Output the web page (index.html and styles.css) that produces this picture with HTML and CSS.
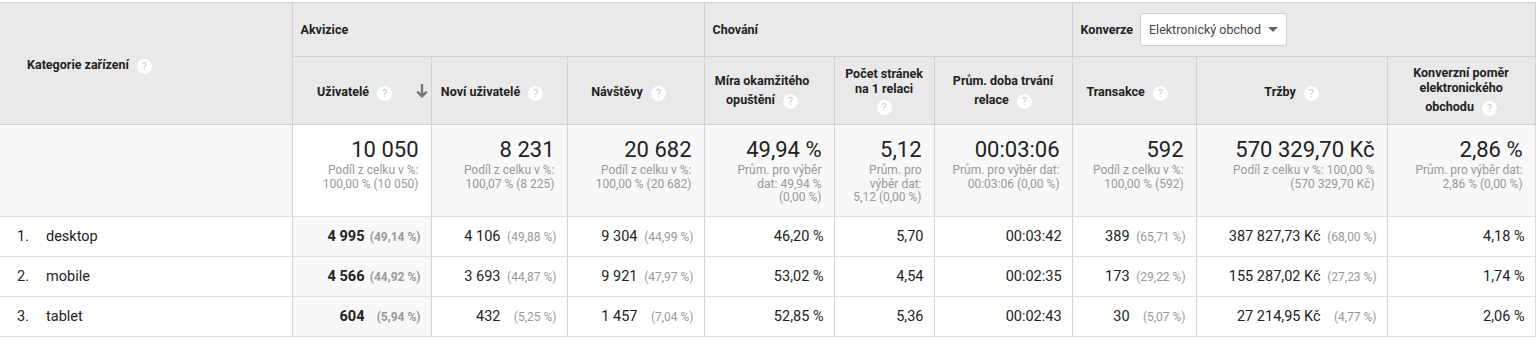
FILE: index.html
```html
<!DOCTYPE html>
<html lang="cs">
<head>
<meta charset="utf-8">
<title>Kategorie zařízení</title>
<link rel="stylesheet" href="styles.css">
</head>
<body>
<table class="report">
  <colgroup>
    <col class="c-dim"><col class="c-users"><col class="c-new"><col class="c-visits"><col class="c-bounce">
    <col class="c-pages"><col class="c-dur"><col class="c-tx"><col class="c-rev"><col class="c-conv">
  </colgroup>
  <thead>
    <tr class="groups">
      <th class="dim-head" rowspan="2">Kategorie zařízení<span class="help">?</span></th>
      <th class="group" colspan="3">Akvizice</th>
      <th class="group" colspan="3">Chování</th>
      <th class="group" colspan="3">
        <div class="conv-group">
          <span>Konverze</span>
          <span class="select">Elektronický obchod<span class="caret"></span></span>
        </div>
      </th>
    </tr>
    <tr class="metrics">
      <th class="metric shifted sorted">Uživatelé<span class="help">?</span>
        <svg class="sort" width="12" height="16" viewBox="0 0 12 16"><path d="M6 1v12.5M1.2 8.6 6 13.4 10.8 8.6" fill="none" stroke="#757575" stroke-width="2.4"/></svg>
      </th>
      <th class="metric shifted">Noví uživatelé<span class="help">?</span></th>
      <th class="metric shifted">Návštěvy<span class="help">?</span></th>
      <th class="metric shifted">Míra okamžitého<br>opuštění<span class="help">?</span></th>
      <th class="metric">Počet stránek<br>na 1 relaci<br><span class="help solo">?</span></th>
      <th class="metric">Prům. doba trvání<br>relace<span class="help">?</span></th>
      <th class="metric shifted">Transakce<span class="help">?</span></th>
      <th class="metric">Tržby<span class="help">?</span></th>
      <th class="metric last">Konverzní poměr<br>elektronického<br>obchodu<span class="help">?</span></th>
    </tr>
  </thead>
  <tbody>
    <tr class="totals">
      <td class="dim-cell"></td>
      <td class="tot sorted"><div class="big">10 050</div><div class="sub">Podíl z celku v %:<br>100,00 % (10 050)</div></td>
      <td class="tot"><div class="big">8 231</div><div class="sub">Podíl z celku v %:<br>100,07 % (8 225)</div></td>
      <td class="tot"><div class="big">20 682</div><div class="sub">Podíl z celku v %:<br>100,00 % (20 682)</div></td>
      <td class="tot"><div class="big">49,94 %</div><div class="sub">Prům. pro výběr<br>dat: 49,94 %<br>(0,00 %)</div></td>
      <td class="tot"><div class="big">5,12</div><div class="sub">Prům. pro<br>výběr dat:<br>5,12 (0,00 %)</div></td>
      <td class="tot"><div class="big">00:03:06</div><div class="sub">Prům. pro výběr dat:<br>00:03:06 (0,00 %)</div></td>
      <td class="tot"><div class="big">592</div><div class="sub">Podíl z celku v %:<br>100,00 % (592)</div></td>
      <td class="tot"><div class="big">570 329,70 Kč</div><div class="sub">Podíl z celku v %: 100,00 %<br>(570 329,70 Kč)</div></td>
      <td class="tot last"><div class="big">2,86 %</div><div class="sub">Prům. pro výběr dat:<br>2,86 % (0,00 %)</div></td>
    </tr>
    <tr class="row">
      <td class="dim-cell"><span class="idx">1.</span>desktop</td>
      <td class="num sorted"><b>4 995</b><span class="pct">(49,14 %)</span></td>
      <td class="num">4 106<span class="pct">(49,88 %)</span></td>
      <td class="num">9 304<span class="pct">(44,99 %)</span></td>
      <td class="num">46,20 %</td>
      <td class="num">5,70</td>
      <td class="num">00:03:42</td>
      <td class="num">389<span class="pct">(65,71 %)</span></td>
      <td class="num">387 827,73 Kč<span class="pct">(68,00 %)</span></td>
      <td class="num last">4,18 %</td>
    </tr>
    <tr class="row">
      <td class="dim-cell"><span class="idx">2.</span>mobile</td>
      <td class="num sorted"><b>4 566</b><span class="pct">(44,92 %)</span></td>
      <td class="num">3 693<span class="pct">(44,87 %)</span></td>
      <td class="num">9 921<span class="pct">(47,97 %)</span></td>
      <td class="num">53,02 %</td>
      <td class="num">4,54</td>
      <td class="num">00:02:35</td>
      <td class="num">173<span class="pct">(29,22 %)</span></td>
      <td class="num">155 287,02 Kč<span class="pct">(27,23 %)</span></td>
      <td class="num last">1,74 %</td>
    </tr>
    <tr class="row">
      <td class="dim-cell"><span class="idx">3.</span>tablet</td>
      <td class="num sorted"><b>604</b><span class="pct">(5,94 %)</span></td>
      <td class="num">432<span class="pct">(5,25 %)</span></td>
      <td class="num">1 457<span class="pct">(7,04 %)</span></td>
      <td class="num">52,85 %</td>
      <td class="num">5,36</td>
      <td class="num">00:02:43</td>
      <td class="num">30<span class="pct">(5,07 %)</span></td>
      <td class="num">27 214,95 Kč<span class="pct">(4,77 %)</span></td>
      <td class="num last">2,06 %</td>
    </tr>
  </tbody>
</table>
</body>
</html>
```

FILE: styles.css
```css
* { box-sizing: border-box; }

body {
  margin: 0;
  background: #fff;
  color: #222;
  font-family: Roboto, "Liberation Sans", Arial, sans-serif;
}

.report {
  border-collapse: collapse;
  table-layout: fixed;
  width: 1535px;
  margin-top: 2px;
}

.c-dim { width: 292px; }
.c-users { width: 139px; }
.c-new { width: 136px; }
.c-visits { width: 137px; }
.c-bounce { width: 130px; }
.c-pages { width: 100px; }
.c-dur { width: 138px; }
.c-tx { width: 124px; }
.c-rev { width: 191px; }
.c-conv { width: 148px; }

th {
  background: #e9e9e9;
  border-top: 1px solid #d2d2d2;
  border-left: 1px solid #d2d2d2;
  border-bottom: 1px solid #d2d2d2;
  font-size: 12.5px;
  font-weight: 700;
  color: #222;
  padding: 0;
}

th.dim-head {
  border-left: none;
  text-align: left;
  padding-left: 27px;
  vertical-align: middle;
}

tr.groups { height: 54px; }
tr.metrics { height: 68px; }

th.group {
  text-align: left;
  padding-left: 8px;
  vertical-align: middle;
}

th.group:last-child { border-right: 1px solid #d2d2d2; }

.conv-group {
  display: flex;
  align-items: center;
  gap: 7px;
}

.select {
  display: inline-flex;
  align-items: center;
  justify-content: space-between;
  width: 147px;
  height: 33px;
  padding: 0 8px 0 8px;
  background: #fff;
  border: 1px solid #cfcfcf;
  border-radius: 3px;
  font-weight: 400;
  font-size: 12.5px;
  color: #444;
}

.caret {
  width: 0;
  height: 0;
  border-left: 5px solid transparent;
  border-right: 5px solid transparent;
  border-top: 5px solid #666;
}

th.metric {
  position: relative;
  text-align: center;
  vertical-align: middle;
  line-height: 15px;
  padding: 0 6px;
}

th.metric.shifted { padding: 0 18px 0 4px; }
th.metric.last { border-right: 1px solid #d2d2d2; }

.help {
  display: inline-block;
  width: 15px;
  height: 15px;
  margin: 6px 0 0 8px;
  border-radius: 50%;
  background: #fff;
  color: #c8c8c8;
  font-size: 10.5px;
  font-weight: 400;
  line-height: 15px;
  text-align: center;
  vertical-align: -1px;
}

.help.solo { margin: 4px 0 0 0; }

.sort {
  position: absolute;
  right: 3px;
  top: 26px;
}

td {
  padding: 0;
  border-left: 1px solid #d2d2d2;
}

td.last { border-right: 1px solid #dcdcdc; }

tr.totals td {
  background: #f8f8f8;
  height: 92px;
  vertical-align: top;
  text-align: right;
  padding: 12px 12px 0 6px;
  border-bottom: 1px solid #e0e0e0;
}

tr.totals td.dim-cell { border-left: none; }
tr.totals td.sorted { background: #fff; }

.big {
  font-size: 22px;
  line-height: 26px;
  color: #222;
}

.sub {
  margin-top: 1px;
  font-size: 12px;
  line-height: 13.5px;
  color: #999;
}

tr.row td {
  height: 40px;
  background: #fff;
  font-size: 14.5px;
  vertical-align: middle;
  border-bottom: 1px solid #e0e0e0;
}

tr.row td.sorted { background: #f8f8f8; }

tr.row td.dim-cell {
  border-left: none;
  padding-left: 17px;
  text-align: left;
}

.idx {
  display: inline-block;
  width: 29px;
}

tr.row td.num {
  text-align: right;
  padding-right: 10px;
}

.pct {
  display: inline-block;
  width: 56px;
  text-align: right;
  font-size: 12px;
  color: #999;
}

td.sorted .pct { font-weight: 700; }
td.sorted b { font-weight: 700; }
```
